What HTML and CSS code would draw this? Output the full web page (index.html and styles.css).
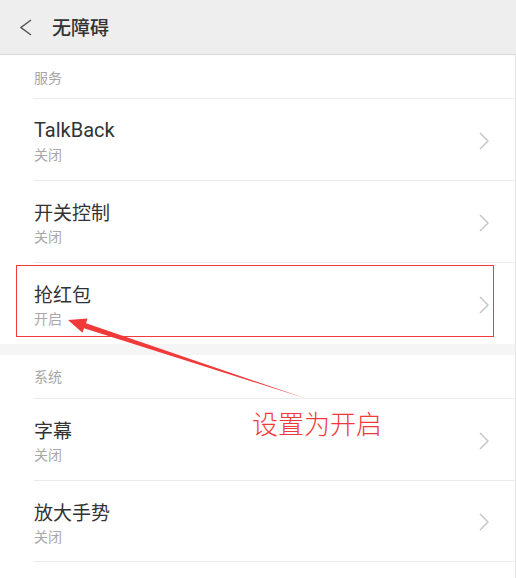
FILE: index.html
```html
<!DOCTYPE html>
<html lang="zh-CN">
<head>
<meta charset="utf-8">
<title>无障碍</title>
<link rel="stylesheet" href="styles.css">
</head>
<body>
<div class="page">
  <header class="topbar">
    <svg class="back" width="12" height="17" viewBox="0 0 12 17"><polyline points="11,1 1,8.5 11,16" fill="none" stroke="#555" stroke-width="1.5"/></svg>
    <h1 class="title">无障碍</h1>
  </header>
  <main class="content">
    <section class="section">
      <div class="section-title">服务</div>
      <div class="row">
        <div class="texts"><div class="name latin">TalkBack</div><div class="state">关闭</div></div>
        <svg class="chev" width="10" height="18" viewBox="0 0 10 18"><polyline points="1,1 9,9 1,17" fill="none" stroke="#c6c6c6" stroke-width="1.5"/></svg>
      </div>
      <div class="row">
        <div class="texts"><div class="name">开关控制</div><div class="state">关闭</div></div>
        <svg class="chev" width="10" height="18" viewBox="0 0 10 18"><polyline points="1,1 9,9 1,17" fill="none" stroke="#c6c6c6" stroke-width="1.5"/></svg>
      </div>
      <div class="row">
        <div class="texts"><div class="name">抢红包</div><div class="state">开启</div></div>
        <svg class="chev" width="10" height="18" viewBox="0 0 10 18"><polyline points="1,1 9,9 1,17" fill="none" stroke="#c6c6c6" stroke-width="1.5"/></svg>
      </div>
    </section>
    <div class="gap"></div>
    <section class="section">
      <div class="section-title second">系统</div>
      <div class="row">
        <div class="texts"><div class="name">字幕</div><div class="state">关闭</div></div>
        <svg class="chev" width="10" height="18" viewBox="0 0 10 18"><polyline points="1,1 9,9 1,17" fill="none" stroke="#c6c6c6" stroke-width="1.5"/></svg>
      </div>
      <div class="row last">
        <div class="texts"><div class="name">放大手势</div><div class="state">关闭</div></div>
        <svg class="chev" width="10" height="18" viewBox="0 0 10 18"><polyline points="1,1 9,9 1,17" fill="none" stroke="#c6c6c6" stroke-width="1.5"/></svg>
      </div>
    </section>
  </main>
  <div class="highlight"></div>
  <svg class="arrow" width="516" height="578" viewBox="0 0 516 578"><polygon points="68,320 87.5,318.5 86,323.3 306,398.5 84,328.2 82.5,332.8" fill="#f03a3a"/></svg>
  <div class="note">设置为开启</div>
</div>
</body>
</html>
```
FILE: styles.css
```css
html, body {
  margin: 0;
  padding: 0;
  background: #ffffff;
}
body {
  font-family: "Noto Sans CJK SC", "Noto Sans", sans-serif;
  color: #333;
}
.page {
  position: relative;
  width: 516px;
  height: 578px;
  overflow: hidden;
}
.topbar {
  height: 54px;
  background: #eeeeee;
  border-bottom: 1px solid #dadada;
  display: flex;
  align-items: center;
  padding-left: 20px;
  box-sizing: content-box;
}
.back {
  display: block;
  margin-top: 0px;
}
.title {
  margin: 0 0 0 20px;
  font-size: 19px;
  font-weight: 500;
  line-height: 24px;
  color: #333;
}
.content {
  width: 515px;
  border-right: 1px solid #e6e6e6;
  min-height: 523px;
}
.section {
  padding-left: 34px;
}
.section-title {
  height: 43px;
  box-sizing: border-box;
  padding-top: 12px;
  font-size: 14px;
  line-height: 20px;
  color: #a6a6a6;
}
.section-title.second {
  padding-top: 11px;
}
.row {
  height: 82px;
  box-sizing: border-box;
  border-top: 1px solid #ebebeb;
  display: flex;
  align-items: center;
  justify-content: space-between;
  padding-right: 26px;
}
.row.last {
  border-bottom: 1px solid #ebebeb;
}
.texts {
  display: flex;
  flex-direction: column;
  padding-top: 3px;
}
.name {
  font-size: 19px;
  line-height: 24px;
  color: #333;
}
.name.latin {
  font-family: Roboto, "Noto Sans CJK SC", sans-serif;
  font-size: 20px;
}
.state {
  margin-top: 2px;
  font-size: 14px;
  line-height: 20px;
  color: #a8a8a8;
}
.chev {
  display: block;
  margin-top: 2px;
}
.gap {
  height: 11px;
  background: #f5f5f5;
}
.highlight {
  position: absolute;
  left: 16px;
  top: 265px;
  width: 476px;
  height: 70px;
  border: 1px solid #ee3b3b;
}
.arrow {
  position: absolute;
  left: 0;
  top: 0;
  pointer-events: none;
}
.note {
  position: absolute;
  left: 252px;
  top: 406px;
  font-size: 26px;
  line-height: 34px;
  font-weight: 300;
  color: #f03a3a;
  letter-spacing: 0;
}
```
